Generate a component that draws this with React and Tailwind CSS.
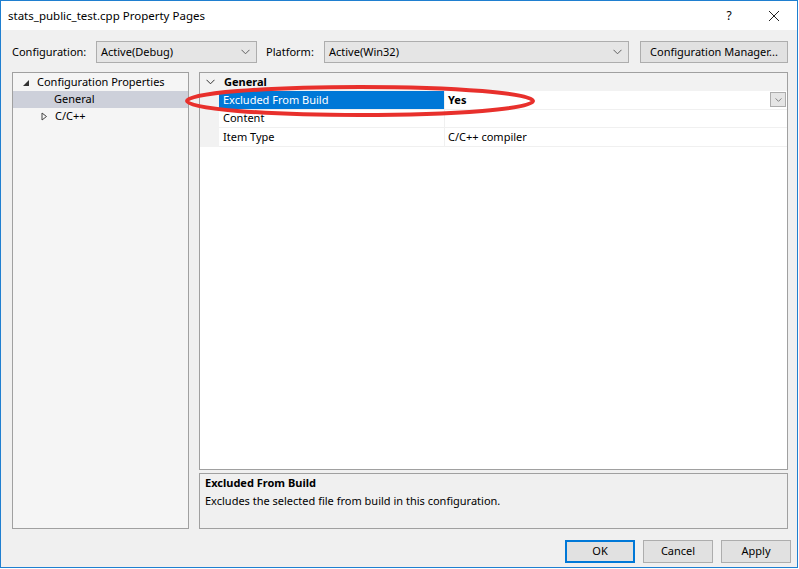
import React from "react";

const Chevron = ({ className = "" }) => (
  <svg width="9" height="6" viewBox="0 0 9 6" className={className}>
    <path d="M0.5 0.8 L4.5 4.8 L8.5 0.8" fill="none" stroke="currentColor" strokeWidth="1" />
  </svg>
);

const Combo = ({ value, width }) => (
  <div
    className={`${width} h-[22px] flex items-center justify-between pl-[4px] pr-[6px] bg-[#e5e5e5] border border-[#adadad]`}
  >
    <span>{value}</span>
    <Chevron className="text-[#606060]" />
  </div>
);

const Button = ({ children, primary }) => (
  <div
    className={`w-[70px] h-[23px] flex items-center justify-center bg-[#e1e1e1] border ${
      primary ? "border-[#0078d7] shadow-[inset_0_0_0_1px_#0078d7]" : "border-[#adadad]"
    }`}
  >
    {children}
  </div>
);

const rows = [
  { name: "Excluded From Build", value: "Yes", selected: true },
  { name: "Content", value: "" },
  { name: "Item Type", value: "C/C++ compiler" },
];

export default function App() {
  return (
    <div className="w-[799px] h-[569px] bg-white font-['Noto_Sans',sans-serif] text-[11px] text-black">
      <div className="relative w-[798px] h-[568px] border border-[#1f7fd0] flex flex-col">
        {/* title bar */}
        <div className="h-[29px] flex items-center bg-white pl-[7px]">
          <span className="text-[11.5px]">stats_public_test.cpp Property Pages</span>
          <div className="ml-auto flex items-center">
            <span className="w-[44px] text-center text-[12px]">?</span>
            <svg width="46" height="12" viewBox="0 0 46 12">
              <path d="M18 1 L28 11 M28 1 L18 11" stroke="#222" strokeWidth="1" />
            </svg>
          </div>
        </div>

        {/* body */}
        <div className="flex-1 bg-[#f0f0f0] flex flex-col pl-[11px] pr-[9px] pt-[11px]">
          <div className="flex items-center h-[22px]">
            <span className="w-[84px]">Configuration:</span>
            <Combo value="Active(Debug)" width="w-[161px]" />
            <span className="ml-[9px] w-[58px]">Platform:</span>
            <Combo value="Active(Win32)" width="w-[305px]" />
            <div className="ml-[11px] w-[148px] h-[22px] flex items-center justify-center bg-[#e1e1e1] border border-[#adadad]">
              Configuration Manager...
            </div>
          </div>

          <div className="flex mt-[9px] h-[457px] gap-[10px]">
            {/* tree */}
            <div className="w-[177px] bg-[#f5f5f5] border border-[#a0a0a0] pt-[1px]">
              <div className="h-[17px] flex items-center">
                <svg width="8" height="8" viewBox="0 0 8 8" className="ml-[9px] mr-[7px]">
                  <path d="M1 7 L7 7 L7 1 Z" fill="#333" />
                </svg>
                <span>Configuration Properties</span>
              </div>
              <div className="h-[17px] flex items-center bg-[#cdd0da] pl-[41px]">General</div>
              <div className="h-[17px] flex items-center">
                <svg width="7" height="9" viewBox="0 0 7 9" className="ml-[28px] mr-[7px]">
                  <path d="M1 1 L5.5 4.5 L1 8 Z" fill="none" stroke="#444" strokeWidth="1" />
                </svg>
                <span>C/C++</span>
              </div>
            </div>

            {/* right column */}
            <div className="flex-1 flex flex-col gap-[3px]">
              <div className="flex-1 bg-white border border-[#a0a0a0] flex flex-col">
                <div className="h-[18px] flex items-center bg-[#f2f2f2]">
                  <Chevron className="ml-[6px] mr-[9px] text-[#333]" />
                  <span className="font-bold">General</span>
                </div>
                {rows.map((r) => (
                  <div key={r.name} className="h-[18.5px] flex items-center">
                    <div className="w-[19px] h-full bg-[#f2f2f2]" />
                    <div className="flex-1 h-full flex items-center border-b border-[#f0f0f0]">
                      <div
                        className={`w-[226px] h-full flex items-center pl-[4px] border-r border-[#f0f0f0] ${
                          r.selected ? "bg-[#0078d7] text-white" : ""
                        }`}
                      >
                        {r.name}
                      </div>
                      <div className={`flex-1 pl-[3px] ${r.selected ? "font-bold" : ""}`}>{r.value}</div>
                      {r.selected && (
                        <div className="w-[16px] h-[15px] mr-[1px] flex items-center justify-center bg-[#e5e5e5] border border-[#acacac]">
                          <Chevron className="text-[#606060] scale-75" />
                        </div>
                      )}
                    </div>
                  </div>
                ))}
              </div>
              <div className="h-[56px] bg-[#f0f0f0] border border-[#a0a0a0] px-[5px] pt-[1px]">
                <div className="font-bold">Excluded From Build</div>
                <div className="mt-[1px]">Excludes the selected file from build in this configuration.</div>
              </div>
            </div>
          </div>

          <div className="flex justify-end gap-[8px] mt-[11px] -mr-[3px]">
            <Button primary>OK</Button>
            <Button>Cancel</Button>
            <Button>Apply</Button>
          </div>
        </div>

        {/* red annotation ellipse */}
        <svg className="absolute left-[180px] top-[80px]" width="365" height="42" viewBox="0 0 365 42">
          <ellipse cx="179" cy="20" rx="173" ry="14" fill="none" stroke="#e8302c" strokeWidth="4" />
        </svg>
      </div>
    </div>
  );
}
